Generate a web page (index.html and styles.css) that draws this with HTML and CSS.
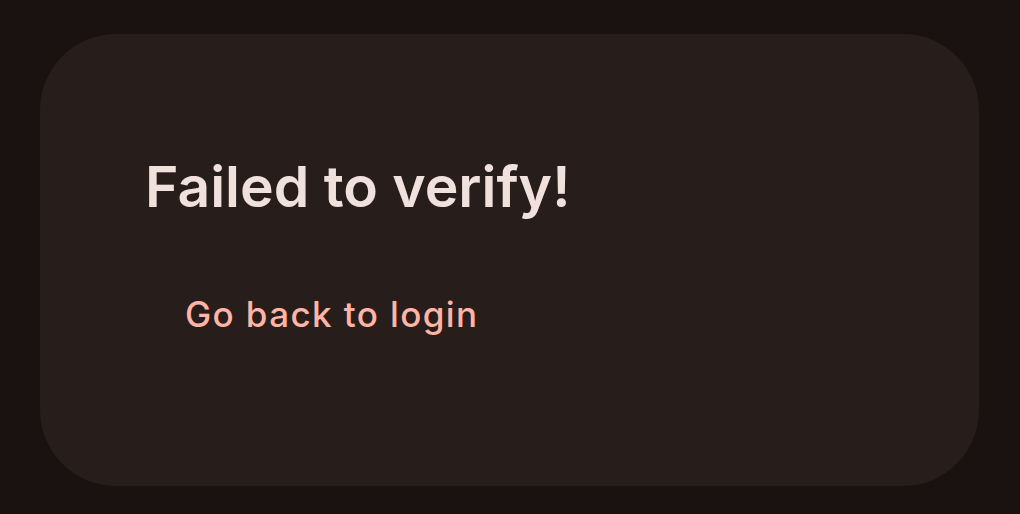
FILE: index.html
```html
<!DOCTYPE html>
<html lang="en">
<head>
  <meta charset="UTF-8">
  <meta name="viewport" content="width=device-width, initial-scale=1.0">
  <title>Verify</title>
  <link rel="stylesheet" href="styles.css">
</head>
<body>
  <div class="card">
    <h1 class="title">Failed to verify!</h1>
    <a class="link-button" href="#">Go back to login</a>
  </div>
</body>
</html>
```

FILE: styles.css
```css
html, body {
  height: 100%;
}

body {
  margin: 0;
  box-sizing: border-box;
  padding: 34px 41px 28px 40px;
  background-color: #1a1211;
  font-family: Inter, "Noto Sans", sans-serif;
  display: flex;
}

.card {
  flex: 1;
  background-color: #271e1c;
  border-radius: 76px;
  padding: 113px 100px 0 105px;
  display: flex;
  flex-direction: column;
  align-items: flex-start;
}

.title {
  margin: 0;
  font-size: 57px;
  font-weight: 600;
  line-height: 80px;
  color: #f1e1dd;
}

.link-button {
  margin-top: 59px;
  padding: 8px 40px;
  font-size: 35px;
  font-weight: 500;
  letter-spacing: 1.4px;
  line-height: 40px;
  color: #ffb4a6;
  text-decoration: none;
}
```
